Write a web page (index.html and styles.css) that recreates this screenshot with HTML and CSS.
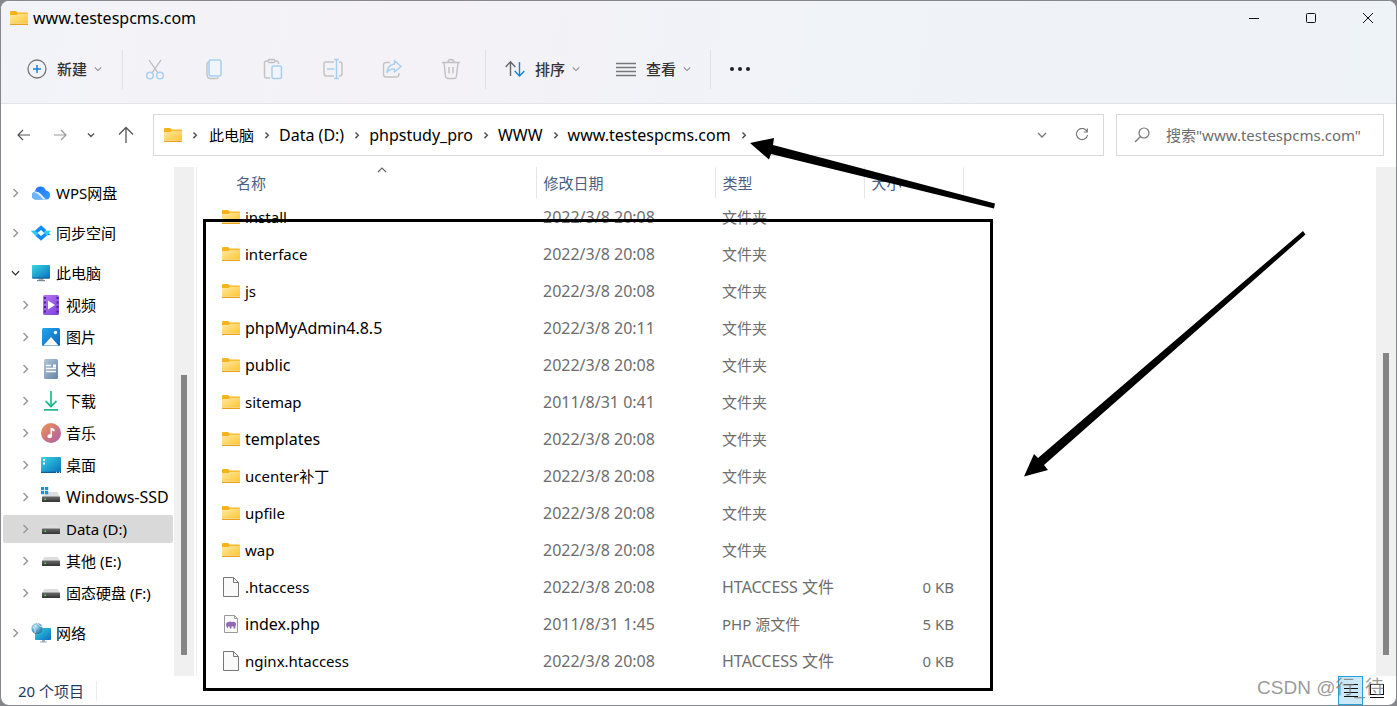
FILE: index.html
```
<!DOCTYPE html>
<html lang="zh-CN">
<head>
<meta charset="utf-8">
<title>www.testespcms.com</title>
<link rel="stylesheet" href="styles.css">
</head>
<body>
<svg class="sprite" aria-hidden="true">
  <defs>
    <linearGradient id="g-folder" x1="0" y1="0" x2="1" y2="1"><stop offset="0" stop-color="#ffe9a6"/><stop offset="1" stop-color="#fdc62f"/></linearGradient>
    <linearGradient id="g-screen" x1="0" y1="0" x2="1" y2="1"><stop offset="0" stop-color="#35d8e0"/><stop offset="1" stop-color="#0b6cc0"/></linearGradient>
    <linearGradient id="g-video" x1="0" y1="0" x2="1" y2="1"><stop offset="0" stop-color="#b878f5"/><stop offset="1" stop-color="#7a3fd8"/></linearGradient>
    <linearGradient id="g-pic" x1="0" y1="0" x2="1" y2="1"><stop offset="0" stop-color="#22a7ea"/><stop offset="1" stop-color="#0a63bd"/></linearGradient>
    <linearGradient id="g-doc" x1="0" y1="0" x2="1" y2="1"><stop offset="0" stop-color="#b3c5d8"/><stop offset="1" stop-color="#6484a8"/></linearGradient>
    <linearGradient id="g-down" x1="0" y1="0" x2="0" y2="1"><stop offset="0" stop-color="#35c994"/><stop offset="1" stop-color="#12a58c"/></linearGradient>
    <linearGradient id="g-music" x1="0" y1="0" x2="1" y2="1"><stop offset="0" stop-color="#f5934e"/><stop offset="1" stop-color="#a75cae"/></linearGradient>
    <linearGradient id="g-cloud" x1="0" y1="0" x2="1" y2="1"><stop offset="0" stop-color="#1a6df5"/><stop offset="1" stop-color="#3a9bff"/></linearGradient>
    <radialGradient id="g-globe" cx="0.35" cy="0.3" r="0.8"><stop offset="0" stop-color="#cfe9f5"/><stop offset="0.5" stop-color="#5aa9d0"/><stop offset="1" stop-color="#24678f"/></radialGradient>
    <linearGradient id="g-drive" x1="0" y1="0" x2="0" y2="1"><stop offset="0" stop-color="#6b6b6b"/><stop offset="1" stop-color="#333"/></linearGradient>
  </defs>
  <symbol id="i-folder" viewBox="0 0 18 14"><path d="M0 1.2Q0 0 1.2 0H6l1.800 1.600H17q1 0 1 1V12H0z" fill="#f6b31a"/><path d="M0 4h6.500l1.600-1.200H18V12.600H0z" fill="url(#g-folder)"/><path d="M0 12.800H18V13.500Q18 14 17.400 14H.6Q0 14 0 13.500z" fill="#e9a01c"/></symbol>
  <symbol id="i-file" viewBox="0 0 18 20"><path d="M1.500.5H11.500L16.500 5.500V19.500H1.500z" fill="#fafafa" stroke="#777"/><path d="M11.500.5V5.500H16.500" fill="none" stroke="#777"/></symbol>
  <symbol id="i-php" viewBox="0 0 18 20"><path d="M2.500 1.500H12.500L15.500 4.500V18.500H2.500z" fill="#fafafa" stroke="#999"/><path d="M12.500 1.500V4.500H15.500" fill="none" stroke="#999"/><path d="M4 11Q4 8 6.500 8Q8 7 10 8Q14 7 14 10.500Q14 12 13.300 12V14.500H11.500V12.500H9.500V14.500H7.700V12.500Q6.500 13 6 12V14.500Q4.300 13.500 4 11z" fill="#9068b5"/></symbol>
  <symbol id="i-right" viewBox="0 0 8 10"><path d="M2 1L6 5L2 9" fill="none" stroke="currentColor" stroke-width="1.500"/></symbol>
  <symbol id="i-crumb" viewBox="0 0 8 10"><path d="M2.500 2.500L5.300 5.300L2.500 8.100" fill="none" stroke="currentColor" stroke-width="1.500"/></symbol>
  <symbol id="i-down" viewBox="0 0 10 8"><path d="M1 2L5 6L9 2" fill="none" stroke="currentColor" stroke-width="1.300"/></symbol>
  <symbol id="i-cloud" viewBox="0 0 20 16"><path d="M5 14.500Q1 14.500 1 10.500Q1 7.500 4 6.500Q5 1.500 9.500 1.500Q13.500 1.500 14.800 5.500Q19 6 19 10.200Q19 14.500 15 14.500z" fill="url(#g-cloud)"/><path d="M1 10.500Q1 7 4.500 6.500Q8 7 10 10L14 14.500H5Q1 14.500 1 10.500z" fill="#6cb6ff"/><path d="M4 6.500Q8 6.500 10.500 9.500L15 14.500H12L9 11Q7 8.500 3 7z" fill="#d6ecff"/></symbol>
  <symbol id="i-sync" viewBox="0 0 18 14"><path d="M9 0L14 4.500L11.500 6.500L9 4.200L5.500 7.300L2.200 7L.2 5.200L3.500 5z" fill="#128cf5"/><path d="M9 14L4 9.500L6.500 7.500L9 9.800L12.500 6.700L15.800 7L17.800 8.800L14.500 9z" fill="#128cf5"/><path d="M0 5H4L6.500 7.500L4 9.500zM18 5H14L11.500 6.500L13 8.500L14.500 9z" fill="#25cdf8"/></symbol>
  <symbol id="i-pc" viewBox="0 0 20 18"><path d="M7.500 14h5v2h-5z" fill="#9fb0b8"/><path d="M6 16h8v1.200H6z" fill="#7c8990"/><rect x="1" y="1" width="18" height="13.500" rx="1" fill="url(#g-screen)"/><path d="M1.500 14h17" stroke="#17568a"/></symbol>
  <symbol id="i-video" viewBox="0 0 20 20"><rect x="2" width="16" height="20" rx="1.500" fill="url(#g-video)"/><path d="M4 2V19M16.500 2V19" stroke="#4b2390" stroke-width="2" stroke-dasharray="2 2.500"/><path d="M7 5.500L14 10L7 14.500z" fill="#fff"/></symbol>
  <symbol id="i-pic" viewBox="0 0 20 20"><rect x="1" y="1" width="18" height="18" rx="1.500" fill="url(#g-pic)"/><path d="M2.500 18.500L10 10L17.500 18.500z" fill="#fff"/><circle cx="14.500" cy="5.500" r="1.700" fill="#fff"/></symbol>
  <symbol id="i-doc" viewBox="0 0 20 20"><rect x="3" width="14" height="20" rx="1.500" fill="url(#g-doc)"/><path d="M5 6.500H10M5 9.500H15M5 12.500H15" stroke="#fff" stroke-width="1.500"/><path d="M12 5.500h3v3h-3z" fill="#fff"/></symbol>
  <symbol id="i-download" viewBox="0 0 20 20"><path d="M4.500 10L10 15.500L15.500 10" fill="none" stroke="url(#g-down)" stroke-width="1.800"/><path d="M3 18H17v1.700H3z" fill="#20b58f"/><path d="M9.100 0h1.800v15H9.100z" fill="#2abf92"/></symbol>
  <symbol id="i-music" viewBox="0 0 20 20"><circle cx="10" cy="10" r="10" fill="url(#g-music)"/><ellipse cx="8.700" cy="13.300" rx="2.200" ry="2" fill="#fff"/><path d="M9.500 13.500V4.500L13.500 6V8.500L10.900 7.600V13.500z" fill="#fff"/></symbol>
  <symbol id="i-desk" viewBox="0 0 20 20"><rect y="2" width="20" height="16" rx="1" fill="url(#g-screen)"/><path d="M2 4h2v2H2zM2 7.500h2v2H2z" fill="#fff"/><path d="M0 17.300H20" stroke="#0a4f86"/><path d="M15 17.300h1M18 17.300h1" stroke="#fff"/></symbol>
  <symbol id="i-drive" viewBox="0 0 20 20"><path d="M3.500 6H16.500L19 10H1z" fill="#dcdde0"/><rect x="1" y="9.500" width="18" height="5.500" rx=".5" fill="url(#g-drive)"/><path d="M3.500 11.500h1.500v1.500H3.500z" fill="#5be04b"/></symbol>
  <symbol id="i-win" viewBox="0 0 20 20"><path d="M6 5H16.500L19 10H1z" fill="#dcdde0"/><rect x="1" y="9.500" width="18" height="5.500" rx=".5" fill="url(#g-drive)"/><path d="M3.500 11.500h1.500v1.500H3.500z" fill="#5be04b"/><path d="M0 0h3.200v3.200H0zM4 0h3.200v3.200H4zM0 4h3.200v3.200H0zM4 4h3.200v3.200H4z" fill="#178fdb"/></symbol>
  <symbol id="i-net" viewBox="0 0 20 20"><path d="M11 16h3v2.500h2v1H9v-1h2z" fill="#9aabb5"/><rect x="4" y="5" width="16" height="12" rx="1" fill="url(#g-screen)"/><circle cx="6" cy="5.500" r="5.500" fill="url(#g-globe)"/><path d="M2 4Q5 6 4 10M6 0Q8 3 11 4" fill="none" stroke="#d5edf7"/></symbol>
</svg>

<div class="window">
  <header class="chrome">
    <div class="titlebar">
      <svg class="folder"><use href="#i-folder"/></svg>
      <h1 class="title">www.testespcms.com</h1>
      <div class="caption">
        <button type="button" aria-label="最小化"><svg width="12" height="12"><path d="M1 6.500H11" stroke="#111"/></svg></button>
        <button type="button" aria-label="最大化"><svg width="12" height="12"><rect x="1.500" y="1.500" width="9" height="9" rx="1" fill="none" stroke="#111"/></svg></button>
        <button type="button" aria-label="关闭"><svg width="12" height="12"><path d="M1 1L11 11M11 1L1 11" stroke="#111" fill="none"/></svg></button>
      </div>
    </div>
    <div class="toolbar">
      <div class="group first">
        <button type="button" class="tool">
          <svg width="20" height="20"><circle cx="10" cy="10" r="9" fill="none" stroke="#777" stroke-width="1.300"/><path d="M10 6V14M6 10H14" stroke="#1583d8" stroke-width="1.500"/></svg>
          <span>新建</span><svg class="caret"><use href="#i-down"/></svg>
        </button>
      </div>
      <div class="group icons">
        <button type="button" aria-label="剪切"><svg width="20" height="22"><path d="M4 2L13 15M16 2L7 15" stroke="#bbb" stroke-width="1.300" fill="none"/><circle cx="5" cy="17.500" r="3.300" fill="none" stroke="#a9cff0" stroke-width="1.500"/><circle cx="15" cy="17.500" r="3.300" fill="none" stroke="#a9cff0" stroke-width="1.500"/></svg></button>
        <button type="button" aria-label="复制"><svg width="20" height="22"><path d="M5 4Q3 4.500 3 7V16Q3 20.500 7 20.500H12Q14 20.500 14.500 19" fill="none" stroke="#c4c4c4" stroke-width="1.500"/><rect x="5" y="2" width="12" height="16" rx="2" fill="#f0f4fb" stroke="#a9cff0" stroke-width="1.500"/></svg></button>
        <button type="button" aria-label="粘贴"><svg width="20" height="22"><path d="M7 20H3.500Q1.500 20 1.500 18V5Q1.500 3 3.500 3H13.500Q15.500 3 15.500 5V6" fill="none" stroke="#c4c4c4" stroke-width="1.500"/><rect x="5" y="1.500" width="7" height="3" rx="1.500" fill="#f3f3f7" stroke="#bfbfbf" stroke-width="1.300"/><rect x="9" y="8" width="9.500" height="12.500" rx="1.500" fill="#f0f4fb" stroke="#a9cff0" stroke-width="1.500"/></svg></button>
        <button type="button" aria-label="重命名"><svg width="20" height="22"><path d="M11 4H3Q1 4 1 6V15Q1 18 3 18H11M16 4H17Q19 4 19 6V15Q19 18 17 18H16" fill="none" stroke="#c4c4c4" stroke-width="1.500"/><path d="M11 1.500H16M13.500 1.500V20.500M11 20.500H16M4 11H11.500" fill="none" stroke="#a9cff0" stroke-width="1.500"/></svg></button>
        <button type="button" aria-label="共享"><svg width="20" height="22"><path d="M8 4.500H4Q1.500 4.500 1.500 7V16Q1.500 19 4 19H14Q17 19 17 16V15" fill="none" stroke="#c4c4c4" stroke-width="1.500"/><path d="M12.500 2.500L19 8.500L12.500 14V11Q8 10.500 5 14.500Q5.500 7 12.500 6z" fill="none" stroke="#a9cff0" stroke-width="1.500" stroke-linejoin="round"/></svg></button>
        <button type="button" aria-label="删除"><svg width="20" height="22"><path d="M1 4.500H19M7 4.500Q7 1.500 10 1.500Q13 1.500 13 4.500M3 4.500L4.500 18Q4.800 20.500 7 20.500H13Q15.200 20.500 15.500 18L17 4.500M8 9V15.500M12 9V15.500" fill="none" stroke="#c0c0c0" stroke-width="1.400"/></svg></button>
      </div>
      <div class="group views">
        <button type="button" class="tool">
          <svg width="20" height="20"><path d="M5.500 17V3M.7 8L5.500 2.700L10.300 8" fill="none" stroke="#666" stroke-width="1.400"/><path d="M14.500 3V17M9.700 12L14.500 17L19.300 12" fill="none" stroke="#1583d8" stroke-width="1.400"/></svg>
          <span>排序</span><svg class="caret"><use href="#i-down"/></svg>
        </button>
        <button type="button" class="tool">
          <svg width="20" height="20"><path d="M0 4.500H20M0 8.500H20M0 12.500H20M0 16.500H20" stroke="#777" stroke-width="1.300"/></svg>
          <span>查看</span><svg class="caret"><use href="#i-down"/></svg>
        </button>
      </div>
      <div class="group last">
        <button type="button" aria-label="更多"><svg width="20" height="6"><circle cx="2" cy="3" r="2" fill="#222"/><circle cx="10" cy="3" r="2" fill="#222"/><circle cx="18" cy="3" r="2" fill="#222"/></svg></button>
      </div>
    </div>
  </header>

  <nav class="navrow" aria-label="导航">
    <div class="history">
      <button type="button" class="step" aria-label="返回"><svg width="14" height="12"><path d="M13 6H1.500M6 1L1 6L6 11" fill="none" stroke="#555" stroke-width="1.200"/></svg></button>
      <button type="button" class="step" aria-label="前进"><svg width="14" height="12"><path d="M1 6H12.500M8 1L13 6L8 11" fill="none" stroke="#999" stroke-width="1.200"/></svg></button>
      <button type="button" class="recent" aria-label="最近位置"><svg width="8" height="8"><path d="M1 2.500L4 5.500L7 2.500" fill="none" stroke="#555" stroke-width="1.400"/></svg></button>
      <button type="button" class="up" aria-label="向上"><svg width="16" height="18"><path d="M8 17V1.500M1 8.500L8 1.500L15 8.500" fill="none" stroke="#555" stroke-width="1.300"/></svg></button>
    </div>
    <div class="address">
      <svg class="folder"><use href="#i-folder"/></svg>
      <svg class="sep"><use href="#i-crumb"/></svg><a href="#pc">此电脑</a>
      <svg class="sep"><use href="#i-crumb"/></svg><a class="latin" href="#d">Data (D:)</a>
      <svg class="sep"><use href="#i-crumb"/></svg><a class="latin" href="#pro">phpstudy_pro</a>
      <svg class="sep"><use href="#i-crumb"/></svg><a class="latin" href="#www">WWW</a>
      <svg class="sep"><use href="#i-crumb"/></svg><a class="latin" href="#site">www.testespcms.com</a>
      <svg class="sep"><use href="#i-crumb"/></svg>
      <div class="address-end">
        <button type="button" aria-label="历史记录"><svg class="caret"><use href="#i-down"/></svg></button>
        <button type="button" aria-label="刷新"><svg width="14" height="14"><path d="M11.800 3A5.600 5.600 0 1 0 12.600 7M12.300 .5V4H8.800" fill="none" stroke="#777" stroke-width="1.200"/></svg></button>
      </div>
    </div>
    <label class="search">
      <svg width="16" height="16"><circle cx="10" cy="6" r="5" fill="none" stroke="#777" stroke-width="1.200"/><path d="M6.500 9.500L1 15" stroke="#777" stroke-width="1.200"/></svg>
      <input type="text" aria-label="搜索" placeholder='搜索"www.testespcms.com"'>
    </label>
  </nav>

  <main class="body">
    <aside class="sidebar">
      <ul class="tree">
        <li class="root"><svg class="tw"><use href="#i-right"/></svg><svg class="ico"><use href="#i-cloud"/></svg><span>WPS网盘</span></li>
        <li class="root"><svg class="tw"><use href="#i-right"/></svg><svg class="ico"><use href="#i-sync"/></svg><span>同步空间</span></li>
        <li class="root"><svg class="tw open"><use href="#i-down"/></svg><svg class="ico"><use href="#i-pc"/></svg><span>此电脑</span></li>
        <li class="leaf"><svg class="tw"><use href="#i-right"/></svg><svg class="ico"><use href="#i-video"/></svg><span>视频</span></li>
        <li class="leaf"><svg class="tw"><use href="#i-right"/></svg><svg class="ico"><use href="#i-pic"/></svg><span>图片</span></li>
        <li class="leaf"><svg class="tw"><use href="#i-right"/></svg><svg class="ico"><use href="#i-doc"/></svg><span>文档</span></li>
        <li class="leaf"><svg class="tw"><use href="#i-right"/></svg><svg class="ico"><use href="#i-download"/></svg><span>下载</span></li>
        <li class="leaf"><svg class="tw"><use href="#i-right"/></svg><svg class="ico"><use href="#i-music"/></svg><span>音乐</span></li>
        <li class="leaf"><svg class="tw"><use href="#i-right"/></svg><svg class="ico"><use href="#i-desk"/></svg><span>桌面</span></li>
        <li class="leaf"><svg class="tw"><use href="#i-right"/></svg><svg class="ico"><use href="#i-win"/></svg><span class="latin">Windows-SSD</span></li>
        <li class="leaf selected"><svg class="tw"><use href="#i-right"/></svg><svg class="ico"><use href="#i-drive"/></svg><span>Data (D:)</span></li>
        <li class="leaf"><svg class="tw"><use href="#i-right"/></svg><svg class="ico"><use href="#i-drive"/></svg><span>其他 (E:)</span></li>
        <li class="leaf"><svg class="tw"><use href="#i-right"/></svg><svg class="ico"><use href="#i-drive"/></svg><span>固态硬盘 (F:)</span></li>
        <li class="root"><svg class="tw"><use href="#i-right"/></svg><svg class="ico"><use href="#i-net"/></svg><span>网络</span></li>
      </ul>
      <div class="scroll side-scroll"><div class="thumb"></div></div>
    </aside>
    <section class="files">
      <table>
        <colgroup><col class="c-name"><col class="c-date"><col class="c-type"><col class="c-size"><col></colgroup>
        <thead><tr><th class="name-head">名称<svg class="sort" viewBox="0 0 10 6"><path d="M1 5L5 1L9 5" fill="none" stroke="#666" stroke-width="1.200"/></svg></th><th>修改日期</th><th>类型</th><th>大小</th><th></th></tr></thead>
        <tbody>
          <tr><td><div class="name"><svg class="folder"><use href="#i-folder"/></svg>install</div></td><td class="latin">2022/3/8 20:08</td><td>文件夹</td><td></td><td></td></tr>
          <tr><td><div class="name"><svg class="folder"><use href="#i-folder"/></svg>interface</div></td><td class="latin">2022/3/8 20:08</td><td>文件夹</td><td></td><td></td></tr>
          <tr><td><div class="name"><svg class="folder"><use href="#i-folder"/></svg>js</div></td><td class="latin">2022/3/8 20:08</td><td>文件夹</td><td></td><td></td></tr>
          <tr><td><div class="name latin"><svg class="folder"><use href="#i-folder"/></svg>phpMyAdmin4.8.5</div></td><td class="latin">2022/3/8 20:11</td><td>文件夹</td><td></td><td></td></tr>
          <tr><td><div class="name latin"><svg class="folder"><use href="#i-folder"/></svg>public</div></td><td class="latin">2022/3/8 20:08</td><td>文件夹</td><td></td><td></td></tr>
          <tr><td><div class="name"><svg class="folder"><use href="#i-folder"/></svg>sitemap</div></td><td class="latin">2011/8/31 0:41</td><td>文件夹</td><td></td><td></td></tr>
          <tr><td><div class="name latin"><svg class="folder"><use href="#i-folder"/></svg>templates</div></td><td class="latin">2022/3/8 20:08</td><td>文件夹</td><td></td><td></td></tr>
          <tr><td><div class="name"><svg class="folder"><use href="#i-folder"/></svg>ucenter补丁</div></td><td class="latin">2022/3/8 20:08</td><td>文件夹</td><td></td><td></td></tr>
          <tr><td><div class="name"><svg class="folder"><use href="#i-folder"/></svg>upfile</div></td><td class="latin">2022/3/8 20:08</td><td>文件夹</td><td></td><td></td></tr>
          <tr><td><div class="name"><svg class="folder"><use href="#i-folder"/></svg>wap</div></td><td class="latin">2022/3/8 20:08</td><td>文件夹</td><td></td><td></td></tr>
          <tr><td><div class="name"><svg class="doc"><use href="#i-file"/></svg>.htaccess</div></td><td class="latin">2022/3/8 20:08</td><td class="latin">HTACCESS 文件</td><td>0 KB</td><td></td></tr>
          <tr><td><div class="name latin"><svg class="doc"><use href="#i-php"/></svg>index.php</div></td><td class="latin">2011/8/31 1:45</td><td>PHP 源文件</td><td>5 KB</td><td></td></tr>
          <tr><td><div class="name"><svg class="doc"><use href="#i-file"/></svg>nginx.htaccess</div></td><td class="latin">2022/3/8 20:08</td><td class="latin">HTACCESS 文件</td><td>0 KB</td><td></td></tr>
        </tbody>
      </table>
    </section>
    <div class="scroll main-scroll"><div class="thumb"></div></div>
  </main>

  <footer class="status">
    <span class="count">20 个项目</span>
    <div class="modes">
      <button type="button" class="mode active" aria-label="详细信息"><svg width="14" height="16"><path d="M0 1.500H14M0 5.500H14M0 9.500H14M0 13.500H14" stroke="#111"/></svg></button>
      <button type="button" class="mode" aria-label="大图标"><svg width="14" height="16"><rect x=".5" y="1.500" width="13" height="10" fill="#fff" stroke="#111"/><path d="M0 14.500H14" stroke="#111"/></svg></button>
    </div>
  </footer>

  <svg class="marks" aria-hidden="true">
    <rect x="203.500" y="219.500" width="787" height="469" fill="none" stroke="#000" stroke-width="3"/>
    <path d="M749 142L773 137L772 144L994 202.500L993 207.500L770 153L768 158.500z"/>
    <path d="M1302 230L1304.500 233.500L1043 464L1047 469L1023 475.500L1033 453L1037 457z"/>
  </svg>
  <div class="watermark">CSDN @行_待</div>
</div>
</body>
</html>
```
FILE: styles.css
```
* { box-sizing: border-box; }
body {
  margin: 0;
  background: #85878c;
  color: #000;
  font: 15px/20px "Noto Sans", "Noto Sans CJK SC", sans-serif;
}
.sprite { position: absolute; width: 0; height: 0; }
button {
  display: inline-flex;
  align-items: center;
  justify-content: center;
  padding: 0;
  border: 0;
  background: none;
  font: inherit;
  color: inherit;
}
svg { display: block; flex: none; }
.latin { font-size: 16px; }
.folder { width: 18px; height: 14px; }
.doc { width: 18px; height: 20px; }
.caret { width: 10px; height: 8px; color: #777; }

.window {
  position: relative;
  display: flex;
  flex-direction: column;
  height: 100vh;
  border: 1px solid #85878c;
  border-radius: 9px;
  background: #fff;
  overflow: hidden;
}

/* Title bar and toolbar */
.chrome {
  border-bottom: 1px solid #e3e4e7;
  background: linear-gradient(100deg, #f2f3f8 0%, #f4f2f6 30%, #f0f3f8 60%, #eef3f8 100%);
}
.titlebar { display: flex; align-items: center; height: 34px; padding-left: 9px; }
.title { flex: 1; margin: 0 0 0 5px; font-size: 16px; font-weight: 400; }
.caption { display: flex; }
.caption button { width: 57px; height: 34px; }
.toolbar { display: flex; align-items: center; height: 68px; }
.group { display: flex; align-items: center; height: 39px; border-right: 1px solid #e0e1e5; }
.first { padding: 0 20px 0 26px; }
.icons { width: 363px; padding: 0 4px 0 2px; }
.icons button { flex: 1; }
.views { gap: 36px; padding: 0 19px 0 19px; }
.last { padding-left: 19px; border: 0; }
.tool { color: #333; font-weight: 500; }
.tool span { margin: 0 7px 0 10px; }
.tool .caret { width: 8px; color: #888; }

/* Address row */
.navrow { display: flex; padding: 10px 12px 11px 0; }
.history { display: flex; width: 152px; padding-left: 5px; }
.step { width: 36px; }
.recent { width: 26px; }
.up { width: 44px; }
.address {
  display: flex;
  flex: 1;
  align-items: center;
  height: 42px;
  padding-left: 10px;
  border: 1px solid #d9d9d9;
}
.address a { color: #000; text-decoration: none; white-space: nowrap; }
.sep { width: 8px; height: 10px; margin: 0 8px 0 9px; color: #555; }
.folder + .sep { margin-right: 10px; }
.address-end { display: flex; gap: 28px; margin-left: auto; padding-right: 14px; }
.search {
  display: flex;
  align-items: center;
  width: 268px;
  height: 42px;
  margin-left: 12px;
  padding: 0 8px 0 17px;
  border: 1px solid #d9d9d9;
}
.search input {
  flex: 1;
  min-width: 0;
  margin-left: 16px;
  padding: 0;
  border: 0;
  outline: 0;
  background: none;
  font: inherit;
}
.search input::placeholder { color: #6d6d6d; opacity: 1; }

/* Body */
.body { display: flex; flex: 1; min-height: 0; }
.scroll { display: grid; justify-content: center; width: 20px; background: #f0f0f0; }
.thumb { grid-row: 2; width: 6px; background: #858585; }
.side-scroll { grid-template-rows: 208fr 280fr 21fr; }
.main-scroll { grid-template-rows: 186fr 302fr 21fr; }
.sidebar { display: flex; width: 196px; padding-right: 2px; border-right: 1px solid #f0f0f0; }
.tree {
  display: flex;
  flex: 1;
  flex-direction: column;
  gap: 4px;
  margin: 0;
  padding: 12px 1px 20px 2px;
  list-style: none;
  overflow: hidden;
}
.tree li { display: flex; flex: none; align-items: center; height: 28px; border-radius: 2px; white-space: nowrap; }
.tree .root { padding-left: 8px; }
.tree .leaf { padding-left: 18px; }
.root + .root { margin-top: 8px; }
.leaf + .root { margin-top: 8px; }
.selected { background: #d9d9d9; }
.tw { width: 9px; height: 10px; color: #999; }
.tw.open { color: #222; }
.ico { width: 20px; height: 20px; margin: 0 5px 0 11px; }

.files { flex: 1; min-width: 0; overflow: hidden; }
table { width: 100%; border-collapse: collapse; table-layout: fixed; }
.c-name { width: 339px; }
.c-date { width: 179px; }
.c-type { width: 149px; }
.c-size { width: 99px; }
th {
  height: 31px;
  padding: 0 7px;
  border-right: 1px solid #e5e5e5;
  color: #4a5e83;
  font-weight: 400;
  text-align: left;
}
th:last-child { border: 0; }
.name-head { position: relative; padding-left: 39px; }
.sort { position: absolute; top: 0; left: 180px; width: 10px; height: 6px; }
td { height: 37px; padding: 0 7px; color: #6d6d6d; white-space: nowrap; line-height: 18px; }
td:nth-child(4) { padding-right: 9px; text-align: right; }
.name { display: flex; align-items: center; gap: 5px; height: 20px; padding-left: 18px; color: #000; }

/* Status bar */
.status { display: flex; align-items: center; justify-content: space-between; height: 29px; padding: 0 7px 0 17px; }
.count { padding-right: 12px; border-right: 1px solid #ececec; color: #1e3a5f; }
.modes { display: flex; gap: 1px; }
.mode { width: 25px; height: 29px; }
.mode.active { border: 1px solid #26a0da; background: #cce8f6; }

/* Annotations over the window */
.marks { position: absolute; inset: 0; width: 100%; height: 100%; pointer-events: none; }
.watermark {
  position: absolute;
  right: 12px;
  bottom: 5px;
  color: rgba(120, 120, 120, 0.75);
  font-family: "Liberation Sans", "Noto Sans CJK SC", sans-serif;
  font-size: 19px;
  line-height: 24px;
  pointer-events: none;
}
```
